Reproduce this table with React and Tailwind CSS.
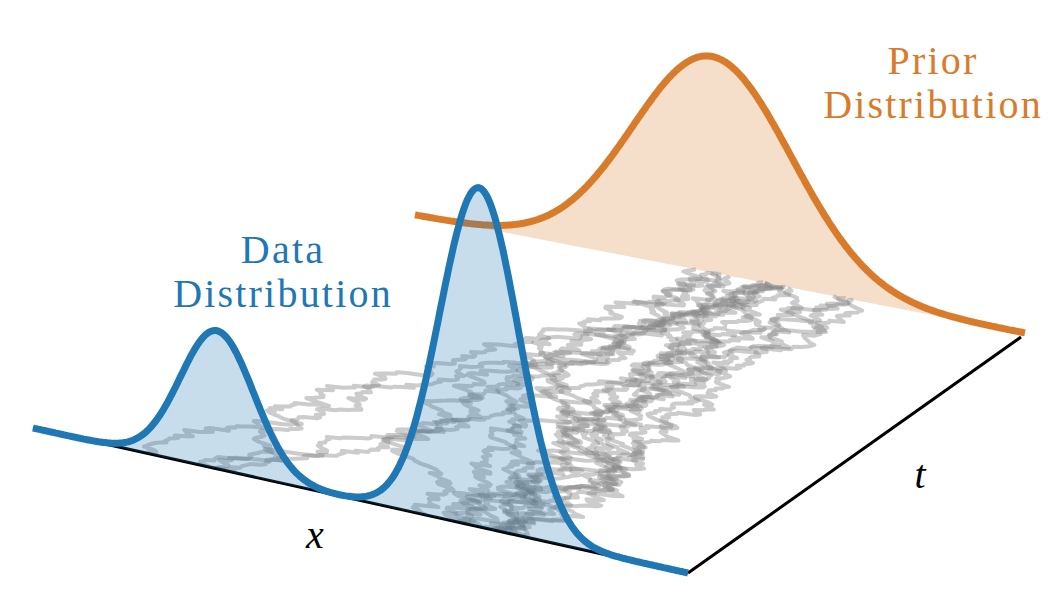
import React, { useMemo } from 'react';

// front (t = 0) and back (t = T) edges of the x axis, in page pixels
const FRONT = { x0: 33, y0: 428, x1: 688, y1: 573 };
const BACK = { x0: 415, y0: 215, x1: 1025, y1: 333 };

const BLUE = '#1f77b4';
const ORANGE = '#d87c2c';

const point = (u, t, h = 0) => {
  const fx = FRONT.x0 + (FRONT.x1 - FRONT.x0) * u;
  const fy = FRONT.y0 + (FRONT.y1 - FRONT.y0) * u;
  const bx = BACK.x0 + (BACK.x1 - BACK.x0) * u;
  const by = BACK.y0 + (BACK.y1 - BACK.y0) * u;
  return [fx * (1 - t) + bx * t, fy * (1 - t) + by * t - h];
};

const gauss = (u, c, s) => Math.exp(-((u - c) ** 2) / (2 * s * s));
const dataDensity = (u) => 138 * gauss(u, 0.281, 0.056) + 339 * gauss(u, 0.681, 0.06);
const priorDensity = (u) => 216 * gauss(u, 0.487, 0.13);

const mulberry32 = (seed) => () => {
  seed |= 0;
  seed = (seed + 0x6d2b79f5) | 0;
  let r = Math.imul(seed ^ (seed >>> 15), 1 | seed);
  r = (r + Math.imul(r ^ (r >>> 7), 61 | r)) ^ r;
  return ((r ^ (r >>> 14)) >>> 0) / 4294967296;
};

const randn = (rng) => {
  const a = Math.max(rng(), 1e-9);
  const b = rng();
  return Math.sqrt(-2 * Math.log(a)) * Math.cos(2 * Math.PI * b);
};

const toD = (pts) => pts.map(([x, y], i) => `${i ? 'L' : 'M'}${x.toFixed(1)} ${y.toFixed(1)}`).join('');

const SAMPLES = Array.from({ length: 401 }, (_, i) => i / 400);

const densityShapes = (density, t) => {
  const curve = SAMPLES.map((u) => point(u, t, density(u)));
  const base = SAMPLES.map((u) => point(u, t)).reverse();
  return { line: toD(curve), fill: toD([...curve, ...base]) + 'Z' };
};

// brownian bridges from a data sample (t = 0) to a prior sample (t = T)
const makeTrajectories = () => {
  const rng = mulberry32(5);
  const steps = 200;
  const sigma = 0.15;
  const out = [];
  for (let i = 0; i < 16; i++) {
    const u0 = i % 4 === 0 ? 0.27 + 0.04 * randn(rng) : 0.68 + 0.05 * randn(rng);
    const u1 = 0.56 + 0.08 * randn(rng);
    const walk = [0];
    for (let k = 0; k < steps; k++) walk.push(walk[k] + sigma * Math.sqrt(1 / steps) * randn(rng));
    const end = walk[steps];
    out.push(
      toD(
        walk.map((w, k) => {
          const t = k / steps;
          return point(u0 + (u1 - u0) * t + w - t * end, t);
        })
      )
    );
  }
  return out;
};

const App = () => {
  const data = useMemo(() => densityShapes(dataDensity, 0), []);
  const prior = useMemo(() => densityShapes(priorDensity, 1), []);
  const trajectories = useMemo(makeTrajectories, []);
  const [ax0, ay0] = point(0, 0);
  const [ax1, ay1] = point(1, 0);

  return (
    <div className="relative w-[1056px] h-[608px] bg-white overflow-hidden font-serif">
      <svg width="1056" height="608" viewBox="0 0 1056 608" className="block">
        {/* prior at t = T */}
        <path d={prior.fill} fill={ORANGE} fillOpacity="0.25" />
        <path d={prior.line} fill="none" stroke={ORANGE} strokeWidth="7" strokeLinejoin="round" />

        {/* sample paths */}
        <g fill="none" stroke="#808080" strokeOpacity="0.4" strokeWidth="4" strokeLinejoin="round">
          {trajectories.map((d, i) => (
            <path key={i} d={d} />
          ))}
        </g>

        {/* axes */}
        <line x1={ax0} y1={ay0} x2={ax1} y2={ay1} stroke="#000" strokeWidth="3" />
        <line x1={ax1} y1={ay1} x2="1021" y2="337" stroke="#000" strokeWidth="3" />

        {/* data at t = 0 */}
        <path d={data.fill} fill={BLUE} fillOpacity="0.25" />
        <path d={data.line} fill="none" stroke={BLUE} strokeWidth="7" strokeLinejoin="round" />
      </svg>

      <div className="absolute left-[283px] top-[228px] -translate-x-1/2 flex flex-col items-center whitespace-nowrap [font-family:Liberation_Serif,serif] text-[40px] leading-[44px] tracking-[2.2px] text-[#1f77b4]">
        <span>Data</span>
        <span>Distribution</span>
      </div>
      <div className="absolute left-[933px] top-[39px] -translate-x-1/2 flex flex-col items-center whitespace-nowrap [font-family:Liberation_Serif,serif] text-[40px] leading-[44px] tracking-[2.2px] text-[#d87c2c]">
        <span>Prior</span>
        <span>Distribution</span>
      </div>
      <div className="absolute left-[315px] top-[515px] -translate-x-1/2 [font-family:Liberation_Serif,serif] text-[40px] leading-[40px] italic text-black">
        x
      </div>
      <div className="absolute left-[920px] top-[455px] -translate-x-1/2 [font-family:Liberation_Serif,serif] text-[40px] leading-[40px] italic text-black">
        t
      </div>
    </div>
  );
};

export default App;
